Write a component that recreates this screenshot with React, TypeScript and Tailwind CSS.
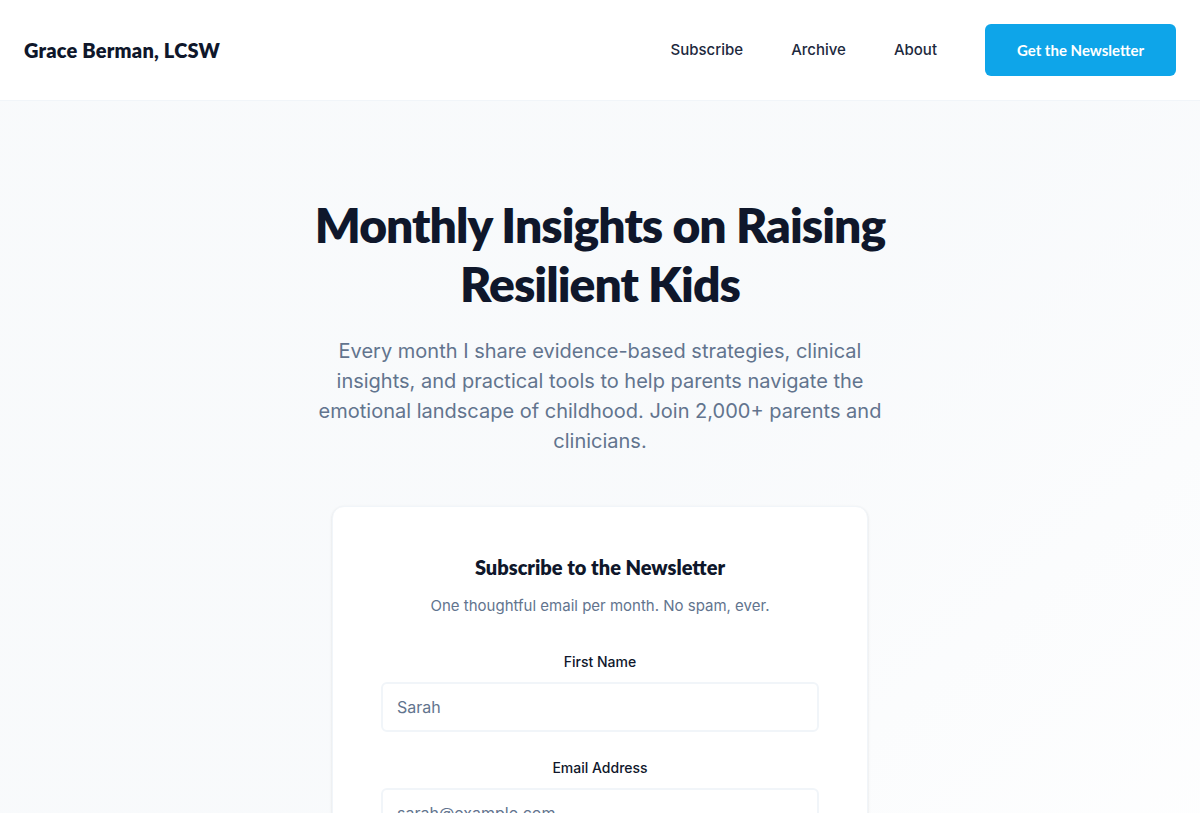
import React from 'react';

const heading = { fontFamily: '"Lato", "Inter", sans-serif' };

const Header: React.FC = () => (
    <header className="bg-white border-b border-slate-100">
        <div className="h-[100px] px-6 flex items-center justify-between">
            <a href="#" className="text-[20px] font-extrabold text-slate-900 tracking-[0.01em]" style={heading}>
                Grace Berman, LCSW
            </a>
            <nav className="flex items-center gap-12">
                <a href="#" className="text-[15px] font-medium text-slate-800">Subscribe</a>
                <a href="#" className="text-[15px] font-medium text-slate-800">Archive</a>
                <a href="#" className="text-[15px] font-medium text-slate-800">About</a>
                <button
                    className="w-[191px] h-[52px] rounded-md bg-[#0ea5e9] text-white text-[15px] font-bold"
                    style={heading}
                >
                    Get the Newsletter
                </button>
            </nav>
        </div>
    </header>
);

const Field: React.FC<{ label: string; placeholder: string; type?: string }> = ({ label, placeholder, type = 'text' }) => (
    <div className="flex flex-col items-center">
        <label className="text-sm leading-5 font-medium text-slate-900 mb-2.5">{label}</label>
        <input
            type={type}
            placeholder={placeholder}
            className="w-full h-[50px] px-3.5 rounded-md border-2 border-slate-100 bg-white text-base text-slate-700 placeholder:text-slate-500 outline-none"
        />
    </div>
);

const SignupCard: React.FC = () => (
    <div className="w-[536px] mx-auto mt-[50px] bg-white rounded-xl border border-slate-100 shadow-sm px-12 pt-12 pb-12">
        <h2 className="text-xl leading-6 font-extrabold text-slate-900 text-center" style={heading}>
            Subscribe to the Newsletter
        </h2>
        <p className="mt-[15px] text-[15px] leading-6 text-slate-500 text-center">
            One thoughtful email per month. No spam, ever.
        </p>
        <form className="mt-[34px] flex flex-col gap-[26px]" onSubmit={(e) => e.preventDefault()}>
            <Field label="First Name" placeholder="Sarah" />
            <Field label="Email Address" placeholder="sarah@example.com" type="email" />
            <button className="h-[52px] rounded-md bg-[#0ea5e9] text-white text-base font-bold" style={heading}>
                Subscribe
            </button>
        </form>
    </div>
);

export default function App() {
    return (
        <div className="min-h-screen bg-linear-to-br from-slate-50 via-slate-50 to-white" style={{ fontFamily: '"Inter", sans-serif' }}>
            <Header />
            <main className="pt-[94px] pb-24 px-6">
                <h1
                    className="max-w-[640px] mx-auto text-center text-5xl leading-[59px] font-extrabold tracking-[-0.02em] text-slate-900"
                    style={heading}
                >
                    Monthly Insights on Raising Resilient Kids
                </h1>
                <p className="max-w-[576px] mx-auto mt-[23px] text-center text-xl leading-[30px] text-slate-500">
                    Every month I share evidence-based strategies, clinical insights, and practical tools to help parents navigate the emotional landscape of childhood. Join 2,000+ parents and clinicians.
                </p>
                <SignupCard />
            </main>
        </div>
    );
}
